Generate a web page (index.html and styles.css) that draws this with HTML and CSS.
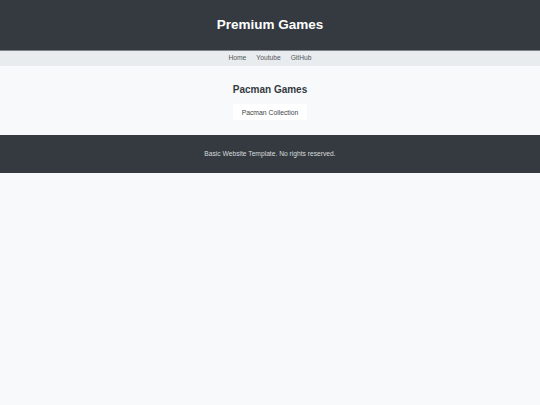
FILE: index.html
```html
<!DOCTYPE html>
<html lang="en">
<head>
<meta charset="utf-8">
<title>Premium Games</title>
<link rel="stylesheet" href="styles.css">
</head>
<body>
<header class="site-header">
  <h1 class="site-title">Premium Games</h1>
</header>
<nav class="site-nav">
  <a href="#" class="nav-link">Home</a>
  <a href="#" class="nav-link">Youtube</a>
  <a href="#" class="nav-link">GitHub</a>
</nav>
<main class="content">
  <h2 class="section-title">Pacman Games</h2>
  <a href="#" class="game-button">Pacman Collection</a>
</main>
<footer class="site-footer">
  <p class="footer-text">Basic Website Template. No rights reserved.</p>
</footer>
</body>
</html>
```

FILE: styles.css
```css
html, body {
  margin: 0;
  padding: 0;
}
body {
  background: #f8f9fa;
  font-family: "Liberation Sans", Arial, sans-serif;
}
.site-header {
  height: 50px;
  background: #343a40;
  border-bottom: 1px solid #7d8389;
  display: flex;
  align-items: center;
  justify-content: center;
}
.site-title {
  margin: 0;
  color: #ffffff;
  font-size: 13.5px;
  font-weight: bold;
  line-height: 1;
}
.site-nav {
  height: 15px;
  background: #e9ecef;
  display: flex;
  align-items: center;
  justify-content: center;
  gap: 10px;
}
.nav-link {
  color: #50555b;
  text-decoration: none;
  font-size: 6.7px;
  line-height: 1;
}
.content {
  height: 69px;
  box-sizing: border-box;
  padding-top: 18px;
  display: flex;
  flex-direction: column;
  align-items: center;
}
.section-title {
  margin: 0;
  color: #343a40;
  font-size: 10px;
  font-weight: bold;
  line-height: 12px;
}
.game-button {
  margin-top: 8px;
  width: 74px;
  height: 16px;
  box-sizing: border-box;
  display: flex;
  align-items: center;
  justify-content: center;
  background: #ffffff;
  border-radius: 3px;
  color: #3f444a;
  text-decoration: none;
  font-size: 6.8px;
}
.site-footer {
  height: 38px;
  background: #343a40;
  display: flex;
  align-items: center;
  justify-content: center;
}
.footer-text {
  margin: 0;
  color: #d8dadc;
  font-size: 6.7px;
  line-height: 1;
}
```
